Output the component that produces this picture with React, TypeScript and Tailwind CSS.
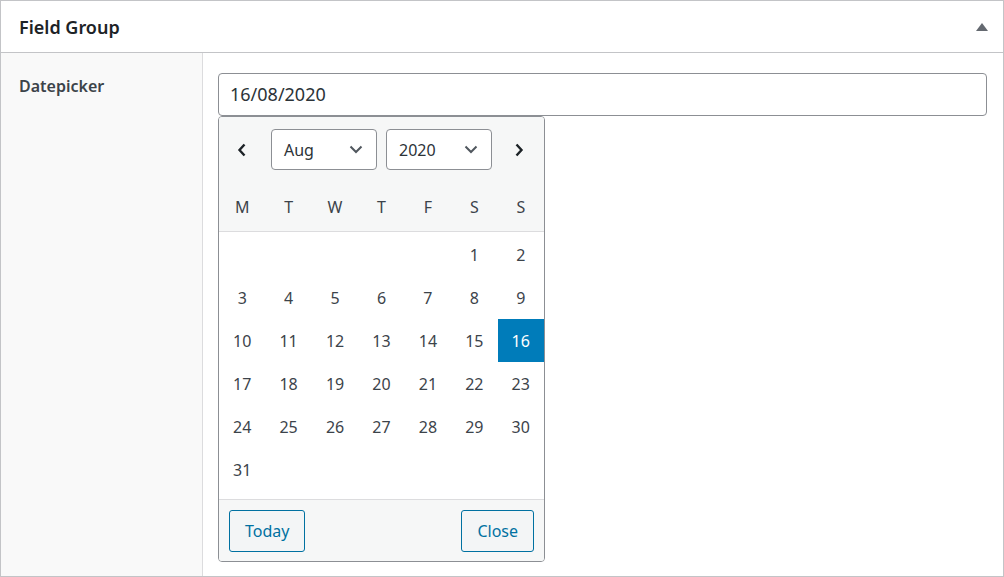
import React from "react";

const font = { fontFamily: '"Noto Sans", "Open Sans", sans-serif' };

const weekdays = ["M", "T", "W", "T", "F", "S", "S"];

// Aug 2020 starts on a Saturday (Monday-first grid)
const cells: (number | null)[] = [
  null, null, null, null, null,
  ...Array.from({ length: 31 }, (_, i) => i + 1),
];

function Chevron() {
  return (
    <svg width="14" height="9" viewBox="0 0 14 9" fill="none">
      <path d="M1.5 1.5 L7 7 L12.5 1.5" stroke="#50575e" strokeWidth="2" />
    </svg>
  );
}

function Arrow({ dir }: { dir: "left" | "right" }) {
  return (
    <svg width="10" height="14" viewBox="0 0 10 14" fill="none">
      <path
        d={dir === "left" ? "M7.5 1.5 L2.5 7 L7.5 12.5" : "M2.5 1.5 L7.5 7 L2.5 12.5"}
        stroke="#1d2327"
        strokeWidth="2.4"
      />
    </svg>
  );
}

function SelectBox({ value }: { value: string }) {
  return (
    <div className="w-[106px] h-[41px] border border-[#8c8f94] rounded-[4px] bg-white flex items-center justify-between pl-[12px] pr-[13px] text-[16px] text-[#2c3338]">
      <span>{value}</span>
      <Chevron />
    </div>
  );
}

export default function App() {
  return (
    <div style={font} className="w-[1004px] h-[577px] bg-white border border-[#c3c4c7] flex flex-col">
      {/* Header */}
      <div className="h-[52px] shrink-0 border-b border-[#c3c4c7] flex items-center justify-between pl-[18px] pr-[15px]">
        <h2 className="text-[18px] font-semibold text-[#1d2327] pt-[2px]">Field Group</h2>
        <svg width="12" height="8" viewBox="0 0 12 8">
          <path d="M6 0 L12 8 L0 8 Z" fill="#646970" />
        </svg>
      </div>

      {/* Field row */}
      <div className="flex flex-1">
        <div className="w-[202px] shrink-0 bg-[#f9f9f9] border-r border-[#dcdcde] pl-[18px] pt-[21px]">
          <label className="text-[16px] font-semibold text-[#3c434a]">Datepicker</label>
        </div>

        <div className="flex-1 pl-[15px] pr-[16px] pt-[20px]">
          <div className="h-[43px] border border-[#8c8f94] rounded-[4px] flex items-center pl-[11px] text-[18px] text-[#2c3338]">
            16/08/2020
          </div>

          {/* Datepicker popup */}
          <div className="w-[327px] border border-[#8c8f94] rounded-[4px] bg-white overflow-hidden">
            <div className="bg-[#f6f7f7] border-b border-[#dcdcde]">
              <div className="flex items-center h-[69px] pt-[12px] pb-[16px]">
                <div className="w-[46px] flex justify-center">
                  <Arrow dir="left" />
                </div>
                <div className="flex gap-[9px] ml-[6px]">
                  <SelectBox value="Aug" />
                  <SelectBox value="2020" />
                </div>
                <div className="flex-1 flex justify-center pl-[2px]">
                  <Arrow dir="right" />
                </div>
              </div>
              <div className="grid grid-cols-7 h-[45px] items-center pb-[3px] text-[16px] text-[#3c434a]">
                {weekdays.map((d, i) => (
                  <div key={i} className="text-center">{d}</div>
                ))}
              </div>
            </div>

            <div className="grid grid-cols-7 pt-[1px] pb-[8px] text-[16px] text-[#3c434a]">
              {cells.map((d, i) => (
                <div
                  key={i}
                  className={
                    d === 16
                      ? "h-[43px] flex items-center justify-center bg-[#007cba] text-white"
                      : "h-[43px] flex items-center justify-center"
                  }
                >
                  {d}
                </div>
              ))}
            </div>

            <div className="bg-[#f6f7f7] border-t border-[#dcdcde] h-[62px] flex items-center justify-between px-[10px]">
              <button className="h-[42px] px-[15px] border border-[#0071a1] rounded-[3px] bg-[#f3f5f6] text-[16px] text-[#0071a1]">
                Today
              </button>
              <button className="h-[42px] px-[15px] border border-[#0071a1] rounded-[3px] bg-[#f3f5f6] text-[16px] text-[#0071a1]">
                Close
              </button>
            </div>
          </div>
        </div>
      </div>
    </div>
  );
}
